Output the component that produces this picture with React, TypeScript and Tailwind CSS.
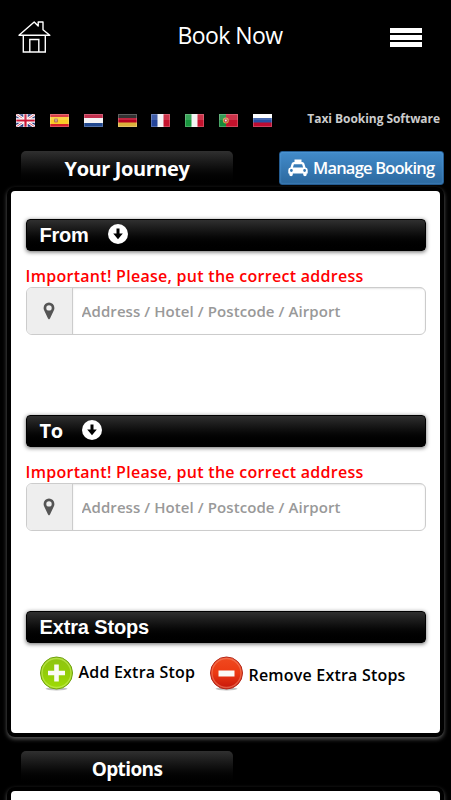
import type { ReactNode } from "react";

function HomeIcon() {
  return (
    <svg width="34" height="34" viewBox="0 0 34 34" fill="none" stroke="#fff" strokeWidth="1.4">
      <path d="M1 15.3 16.2 2 20.2 6V2H25V9.8L31.8 15.3Z" strokeLinejoin="round" />
      <path d="M5.3 15.5V32H27.3V15.5M11.8 31.5V19.5H20.8V31.5" />
    </svg>
  );
}

function TaxiIcon() {
  return (
    <svg width="20" height="18" viewBox="0 0 20 18" fill="#fff" className="shrink-0">
      <path
        fillRule="evenodd"
        d="M6.5 0.5H13.5V3H14.2Q15.8 3 16.3 4.6L17.5 8.5Q19.7 8.8 19.7 11V14.4H18.7V15.5A1.6 1.6 0 0 1 15.2 15.5V14.4H4.8V15.5A1.6 1.6 0 0 1 1.3 15.5V14.4H0.3V11Q0.3 8.8 2.5 8.5L3.7 4.6Q4.2 3 5.8 3H6.5ZM5.9 5.2 4.9 8.5H15.1L14.1 5.2ZM3.4 10.1A1.4 1.4 0 1 0 3.4 12.9A1.4 1.4 0 1 0 3.4 10.1ZM16.6 10.1A1.4 1.4 0 1 0 16.6 12.9A1.4 1.4 0 1 0 16.6 10.1Z"
      />
    </svg>
  );
}

function PinIcon() {
  return (
    <svg width="12" height="18" viewBox="0 0 12 18" fill="#555">
      <path
        fillRule="evenodd"
        d="M6 0.5A5.4 5.4 0 0 1 11.4 5.9Q11.4 7.2 10.9 8.2L7 16.6Q6 18.2 5 16.6L1.1 8.2Q0.6 7.2 0.6 5.9A5.4 5.4 0 0 1 6 0.5ZM6 3.2A2.7 2.7 0 1 0 6 8.6A2.7 2.7 0 1 0 6 3.2Z"
      />
    </svg>
  );
}

function Flag({ children }: { children: ReactNode }) {
  return (
    <svg width="19" height="13" viewBox="0 0 19 13">
      {children}
      <rect width="19" height="6" fill="#fff" opacity="0.14" />
      <rect x="0.5" y="0.5" width="18" height="12" fill="none" stroke="#fff" strokeOpacity="0.22" />
    </svg>
  );
}

function Flags() {
  return (
    <div className="flex gap-[14.85px]">
      <Flag>
        <rect width="19" height="13" fill="#24347c" />
        <path d="M0 0 19 13M19 0 0 13" stroke="#fff" strokeWidth="2.8" />
        <path d="M0 0 19 13M19 0 0 13" stroke="#d34053" strokeWidth="0.9" />
        <path d="M9.5 0V13M0 6.5H19" stroke="#fff" strokeWidth="4.4" />
        <path d="M9.5 0V13M0 6.5H19" stroke="#cb1636" strokeWidth="2.2" />
      </Flag>
      <Flag>
        <rect width="19" height="13" fill="#d5202b" />
        <rect y="3" width="19" height="7" fill="#fbcb27" />
        <rect x="4" y="4.5" width="4" height="4" rx="1" fill="#b9744c" />
        <rect x="5" y="5.5" width="2" height="2" fill="#c99d9a" />
      </Flag>
      <Flag>
        <rect width="19" height="13" fill="#f4f4f6" />
        <rect width="19" height="4" fill="#b80f32" />
        <rect y="9" width="19" height="4" fill="#21488f" />
      </Flag>
      <Flag>
        <rect width="19" height="13" fill="#b7001f" />
        <rect width="19" height="4" fill="#111" />
        <rect y="8.5" width="19" height="4.5" fill="#dcb13b" />
      </Flag>
      <Flag>
        <rect width="19" height="13" fill="#f2f2f5" />
        <rect width="6.5" height="13" fill="#24449a" />
        <rect x="12.5" width="6.5" height="13" fill="#c4122d" />
      </Flag>
      <Flag>
        <rect width="19" height="13" fill="#f2f2f2" />
        <rect width="6.5" height="13" fill="#17943c" />
        <rect x="12.5" width="6.5" height="13" fill="#c4122d" />
      </Flag>
      <Flag>
        <rect width="19" height="13" fill="#c4122d" />
        <rect width="7" height="13" fill="#158a3b" />
        <circle cx="6.8" cy="6.5" r="3" fill="#cfa64a" />
        <circle cx="6.8" cy="6.5" r="1.9" fill="#c4304a" />
        <circle cx="6.8" cy="6.5" r="1" fill="#eee" />
      </Flag>
      <Flag>
        <rect width="19" height="13" fill="#2850a2" />
        <rect width="19" height="4" fill="#fff" />
        <rect y="8.5" width="19" height="4.5" fill="#bd0b30" />
      </Flag>
    </div>
  );
}

function Tab({ children }: { children: ReactNode }) {
  return (
    <div className="ml-[21px] flex h-9 w-[212px] items-center justify-center rounded-t-[5px] bg-linear-to-b from-[#303030] to-black text-white">
      {children}
    </div>
  );
}

function Bar({ children }: { children: ReactNode }) {
  return (
    <div className="flex h-8 items-center rounded-[4px] border border-black bg-linear-to-b from-[#303030] to-black pl-[13px] font-['Liberation_Sans',sans-serif] text-[20px] font-bold text-white shadow-[0_1px_4px_rgba(0,0,0,0.6)]">
      {children}
    </div>
  );
}

function DownBadge() {
  return (
    <span className="mb-[3px] flex size-5 items-center justify-center rounded-full bg-white text-black">
      <svg width="12" height="12" viewBox="0 0 12 12" fill="currentColor">
        <path d="M4.5 0.5H7.5V5.5H10.8L6 11.2 1.2 5.5H4.5Z" />
      </svg>
    </span>
  );
}

function AddressField() {
  return (
    <div>
      <p className="mt-[15px] h-[21px] text-[16px] leading-[21px] tracking-[0.28px] whitespace-nowrap text-[#f00]">
        Important! Please, put the correct address
      </p>
      <div className="flex h-12 overflow-hidden rounded-[6px] border-[1.5px] border-[#ccc] bg-white">
        <div className="flex w-[46px] items-center justify-center border-r border-[#ccc] bg-[#eee]">
          <PinIcon />
        </div>
        <input
          className="min-w-0 flex-1 pr-2 pl-[9px] text-[15px] tracking-[0.08px] shadow-[inset_0_1px_2px_rgba(0,0,0,0.1)] outline-none placeholder:text-[#999]"
          placeholder="Address / Hotel / Postcode / Airport"
        />
      </div>
    </div>
  );
}

function RoundButton({ kind }: { kind: "add" | "remove" }) {
  const add = kind === "add";
  return (
    <svg width="34" height="36" viewBox="0 0 34 36">
      <defs>
        <linearGradient id={kind} x2="0" y2="1">
          <stop offset="0" stopColor={add ? "#8fc412" : "#f04a20"} />
          <stop offset="0.5" stopColor={add ? "#92cd08" : "#ec3a12"} />
          <stop offset="1" stopColor={add ? "#a0dc05" : "#c5150c"} />
        </linearGradient>
      </defs>
      <ellipse cx="16.5" cy="32.8" rx="11" ry="1.6" fill="#999" opacity="0.6" />
      <circle cx="16.5" cy="17" r="16" fill={`url(#${kind})`} stroke={add ? "#6fa010" : "#b1281b"} strokeWidth="1" />
      <circle cx="16.5" cy="17" r="14.5" fill="none" stroke={add ? "#c9ef66" : "#f48466"} strokeWidth="1.3" opacity="0.6" />
      <path d={add ? "M16.5 8.5V25.5M8 17H25" : "M8.5 17.5H24.5"} stroke="#fbfbf5" strokeWidth={add ? 4.6 : 6} />
    </svg>
  );
}

export default function App() {
  return (
    <div className="h-[800px] w-[451px] overflow-hidden bg-black font-['Open_Sans',sans-serif] font-semibold">
      <header className="flex h-[114px] items-start justify-between pr-[29px] pl-[18px]">
        <div className="w-[52px] pt-5">
          <HomeIcon />
        </div>
        <h1 className="pt-[19px] text-[23px] leading-8 font-normal tracking-[-0.6px] text-white">Book Now</h1>
        <div className="flex flex-col gap-[2px] pt-7">
          <div className="h-[5px] w-8 bg-white" />
          <div className="h-[5px] w-8 bg-white" />
          <div className="h-[5px] w-8 bg-white" />
        </div>
      </header>

      <div className="flex h-[37px] items-start justify-between pr-[11px] pl-4">
        <Flags />
        <span className="-mt-[3px] text-[12px] leading-4 font-bold tracking-[-0.05px] text-[#ccc]">Taxi Booking Software</span>
      </div>

      <div className="flex h-9 justify-between pr-[7px]">
        <Tab>
          <span className="text-[20px] font-bold tracking-[-0.42px]">Your Journey</span>
        </Tab>
        <button className="flex h-[34px] w-[165px] shrink-0 items-center gap-[5px] rounded-[3px] border border-[#245c91] bg-linear-to-b from-[#428bca] to-[#2c699f] pl-[8px] text-[16.5px] tracking-[-0.8px] whitespace-nowrap text-white shadow-[inset_0_0_2px_rgba(120,190,250,0.6)]">
          <TaxiIcon />
          <span>Manage Booking</span>
        </button>
      </div>

      <main className="relative mx-[7px] h-[550px] rounded-[8px] border-4 border-black bg-white pt-7 pr-[14.5px] pl-[14.5px] shadow-[0_2px_4px_0_#5c5c5c]">
        <section className="h-[196px]">
          <Bar>
            <span className="w-[68px] tracking-[-0.2px]">From</span>
            <DownBadge />
          </Bar>
          <AddressField />
        </section>
        <section className="h-[196px]">
          <Bar>
            <span className="w-[42px] font-['Open_Sans',sans-serif] tracking-[-0.4px]">To</span>
            <DownBadge />
          </Bar>
          <AddressField />
        </section>
        <section>
          <Bar>
            <span className="tracking-[-0.15px]">Extra Stops</span>
          </Bar>
          <div className="flex pt-[13px] pl-[14px]">
            <RoundButton kind="add" />
            <span className="mt-1 ml-[5px] w-[131px] text-[16px] leading-6 tracking-[0.2px] whitespace-nowrap">Add Extra Stop</span>
            <RoundButton kind="remove" />
            <span className="mt-[7px] ml-[5px] text-[16px] leading-6 tracking-[0.2px] whitespace-nowrap">Remove Extra Stops</span>
          </div>
        </section>
      </main>

      <div className="h-9 pt-[14px]">
        <Tab>
          <span className="text-[19px] font-bold tracking-[-0.6px]">Options</span>
        </Tab>
      </div>
      <div className="mx-[7px] mt-[14px] h-10 rounded-[8px] border-4 border-black bg-white shadow-[0_2px_4px_0_#5c5c5c]" />
    </div>
  );
}
